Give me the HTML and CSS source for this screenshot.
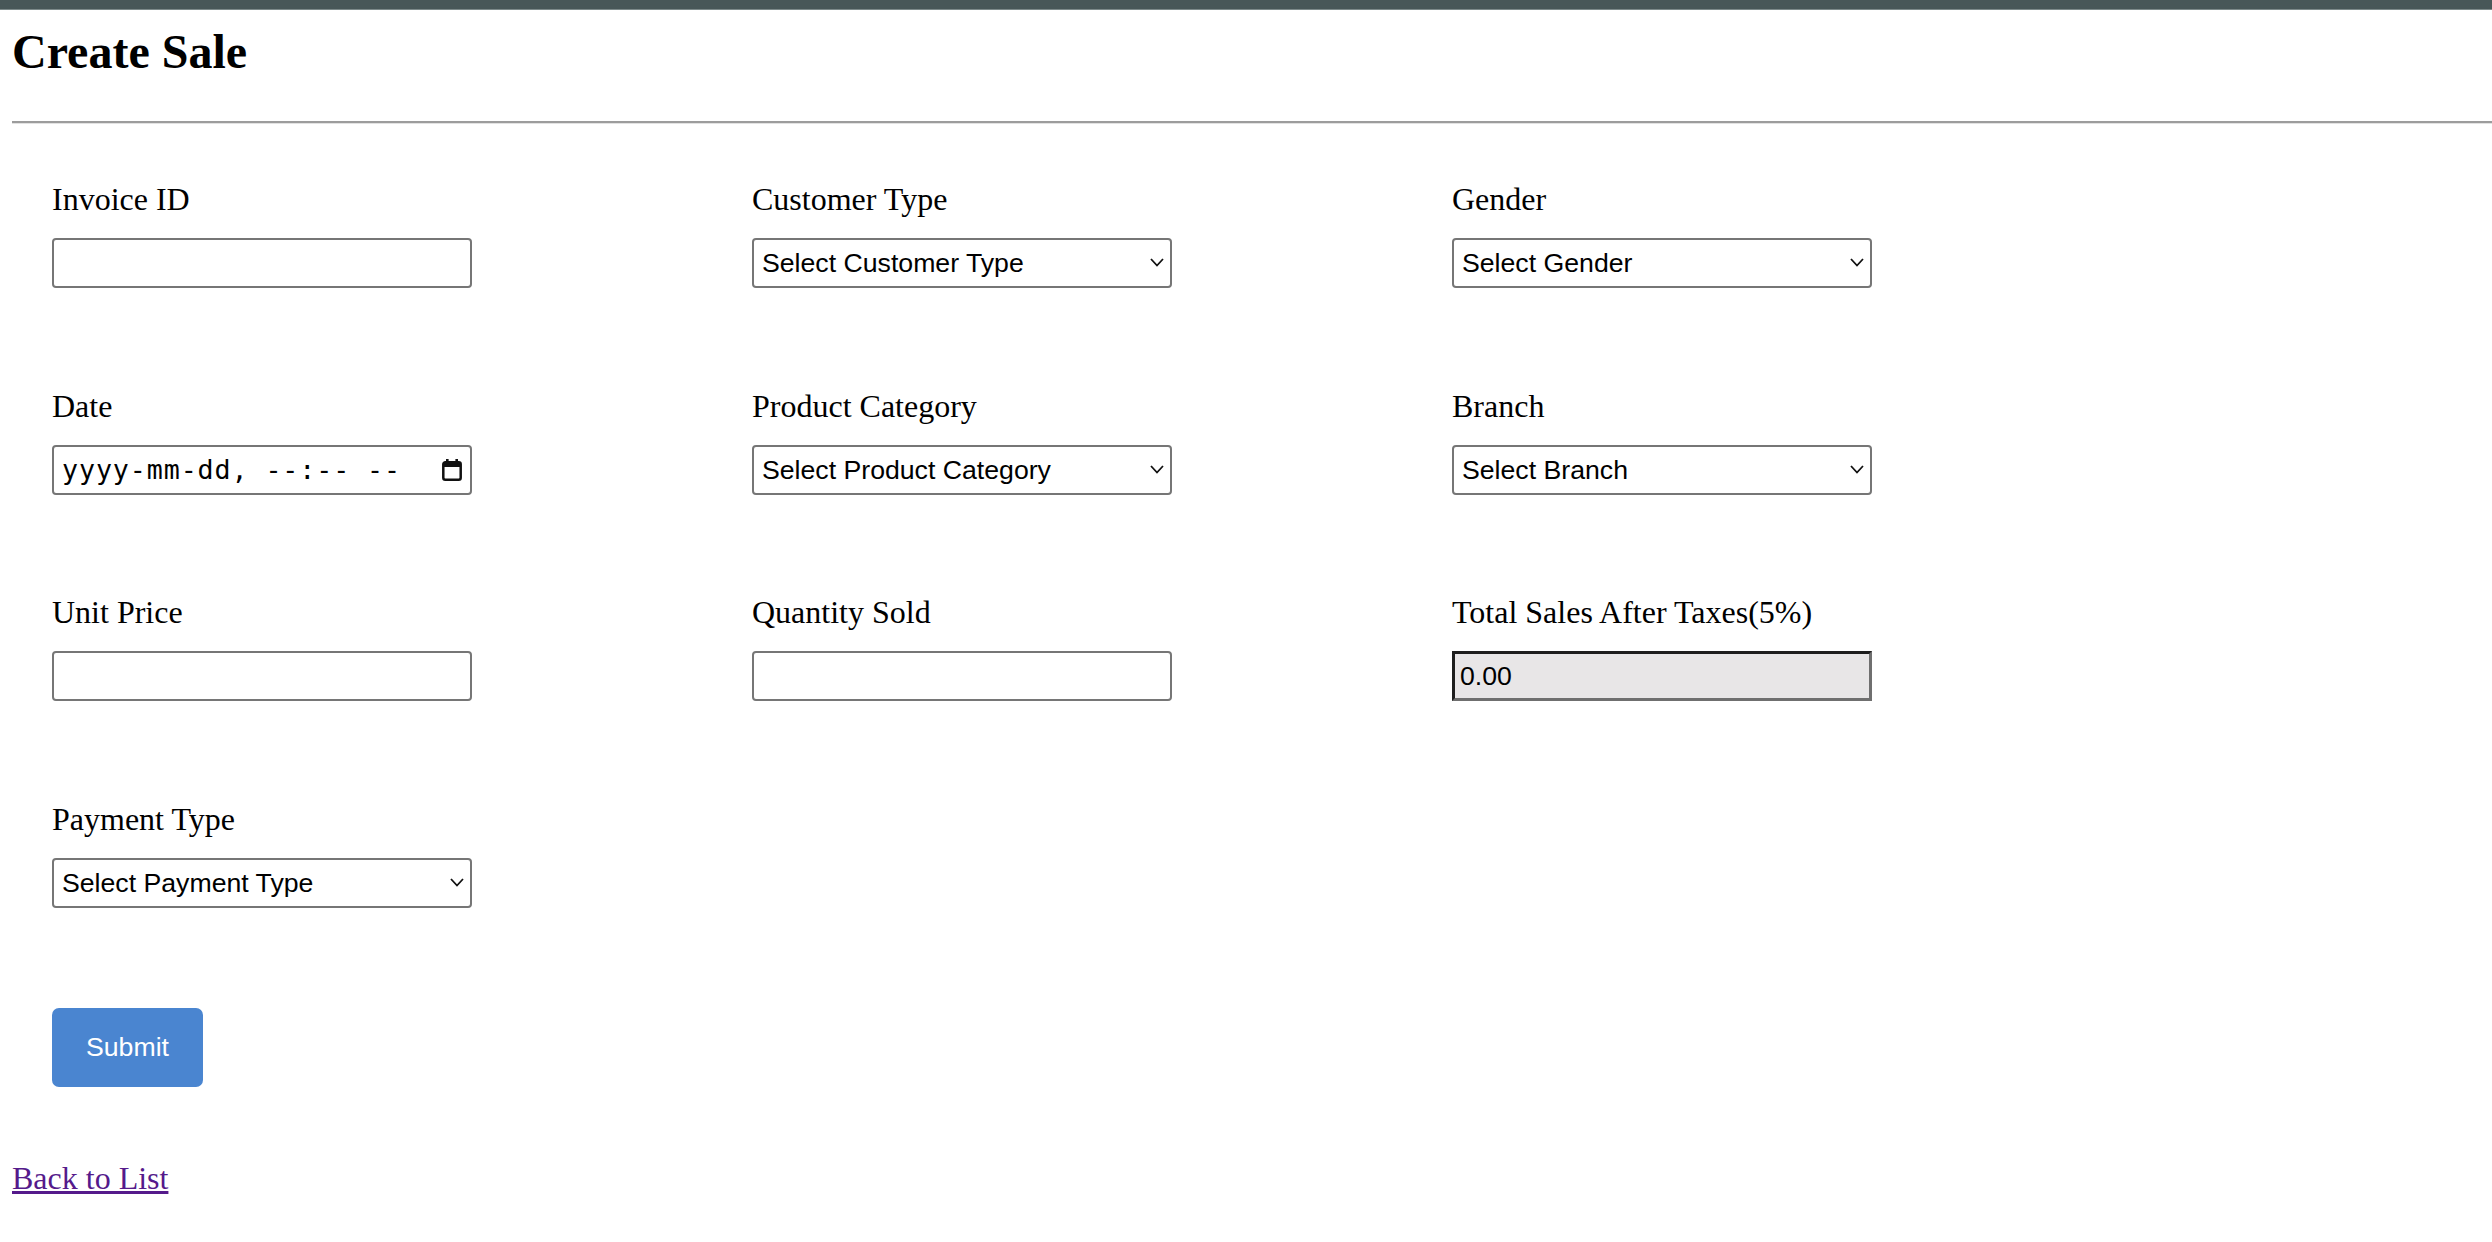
FILE: index.html
```html
<!DOCTYPE html>
<html lang="en">
<head>
<meta charset="utf-8">
<title>Create Sale</title>
<link rel="stylesheet" href="styles.css">
</head>
<body>
<div class="topbar"></div>
<main class="page">
  <h1 class="title">Create Sale</h1>
  <hr class="divider">
  <form class="sale-form">
    <div class="form-grid">
      <div class="field">
        <label class="field-label" for="invoice">Invoice ID</label>
        <input class="text-input" id="invoice" type="text">
      </div>
      <div class="field">
        <label class="field-label" for="ctype">Customer Type</label>
        <div class="select-wrap">
          <select class="select-input" id="ctype"><option>Select Customer Type</option></select>
          <svg class="chevron" width="14" height="9" viewBox="0 0 14 9"><polyline points="1,1 7,7.5 13,1" fill="none" stroke="#111" stroke-width="1.8"/></svg>
        </div>
      </div>
      <div class="field">
        <label class="field-label" for="gender">Gender</label>
        <div class="select-wrap">
          <select class="select-input" id="gender"><option>Select Gender</option></select>
          <svg class="chevron" width="14" height="9" viewBox="0 0 14 9"><polyline points="1,1 7,7.5 13,1" fill="none" stroke="#111" stroke-width="1.8"/></svg>
        </div>
      </div>

      <div class="field">
        <label class="field-label" for="date">Date</label>
        <div class="date-input">
          <input class="date-text" id="date" type="text" placeholder="yyyy-mm-dd, --:-- --">
          <svg class="cal-icon" width="20" height="22" viewBox="0 0 20 22">
            <rect x="4" y="0" width="2.6" height="4" fill="#111"/>
            <rect x="13.4" y="0" width="2.6" height="4" fill="#111"/>
            <rect x="1.3" y="3.3" width="17.4" height="17.4" rx="2" fill="none" stroke="#111" stroke-width="2.5"/>
            <rect x="1" y="3" width="18" height="5" fill="#111"/>
          </svg>
        </div>
      </div>
      <div class="field">
        <label class="field-label" for="pcat">Product Category</label>
        <div class="select-wrap">
          <select class="select-input" id="pcat"><option>Select Product Category</option></select>
          <svg class="chevron" width="14" height="9" viewBox="0 0 14 9"><polyline points="1,1 7,7.5 13,1" fill="none" stroke="#111" stroke-width="1.8"/></svg>
        </div>
      </div>
      <div class="field">
        <label class="field-label" for="branch">Branch</label>
        <div class="select-wrap">
          <select class="select-input" id="branch"><option>Select Branch</option></select>
          <svg class="chevron" width="14" height="9" viewBox="0 0 14 9"><polyline points="1,1 7,7.5 13,1" fill="none" stroke="#111" stroke-width="1.8"/></svg>
        </div>
      </div>

      <div class="field">
        <label class="field-label" for="price">Unit Price</label>
        <input class="text-input" id="price" type="text">
      </div>
      <div class="field">
        <label class="field-label" for="qty">Quantity Sold</label>
        <input class="text-input" id="qty" type="text">
      </div>
      <div class="field">
        <label class="field-label" for="total">Total Sales After Taxes(5%)</label>
        <input class="total-input" id="total" type="text" value="0.00" readonly>
      </div>

      <div class="field">
        <label class="field-label" for="ptype">Payment Type</label>
        <div class="select-wrap">
          <select class="select-input" id="ptype"><option>Select Payment Type</option></select>
          <svg class="chevron" width="14" height="9" viewBox="0 0 14 9"><polyline points="1,1 7,7.5 13,1" fill="none" stroke="#111" stroke-width="1.8"/></svg>
        </div>
      </div>
    </div>
    <div class="actions">
      <button class="submit-btn" type="button">Submit</button>
    </div>
  </form>
  <a class="back-link" href="#">Back to List</a>
</main>
</body>
</html>
```

FILE: styles.css
```css
html, body {
  margin: 0;
  padding: 0;
  background: #ffffff;
}

body {
  font-family: "Liberation Serif", "Times New Roman", serif;
  color: #000;
}

.topbar {
  height: 9px;
  background: #485758;
  border-bottom: 1px solid #7d8a8a;
}

.page {
  padding: 0 0 0 12px;
}

.title {
  margin: 15px 0 0;
  font-size: 48px;
  line-height: 53px;
  font-weight: bold;
}

.divider {
  margin: 43px 0 0;
  height: 0;
  border: 0;
  border-top: 2px solid #9c9c9c;
  border-bottom: 1px solid #e2e2e2;
}

.sale-form {
  padding: 58px 0 0 40px;
}

.form-grid {
  display: grid;
  grid-template-columns: repeat(3, 700px);
  row-gap: 100.6px;
}

.field {
  display: flex;
  flex-direction: column;
  align-items: flex-start;
}

.field-label {
  font-size: 32px;
  line-height: 35px;
  margin-bottom: 21px;
}

.text-input {
  box-sizing: border-box;
  width: 420px;
  height: 50px;
  border: 2px solid #767676;
  border-radius: 4px;
  background: #fff;
  margin: 0;
  padding: 0 8px;
  font-family: "Liberation Sans", Arial, sans-serif;
  font-size: 26.67px;
}

.select-wrap {
  position: relative;
  width: 420px;
  height: 50px;
}

.select-input {
  appearance: none;
  -webkit-appearance: none;
  box-sizing: border-box;
  width: 420px;
  height: 50px;
  margin: 0;
  border: 2px solid #767676;
  border-radius: 4px;
  background: #fff;
  color: #000;
  padding: 0 30px 0 8px;
  font-family: "Liberation Sans", Arial, sans-serif;
  font-size: 26.67px;
}

.chevron {
  position: absolute;
  right: 8px;
  top: 20px;
  pointer-events: none;
}

.date-input {
  box-sizing: border-box;
  width: 420px;
  height: 50px;
  border: 2px solid #767676;
  border-radius: 4px;
  background: #fff;
  display: flex;
  align-items: center;
  padding: 0 8px 0 8px;
  gap: 8px;
}

.date-text {
  flex: 1;
  min-width: 0;
  border: 0;
  outline: none;
  padding: 0;
  margin: 0;
  background: transparent;
  font-family: "DejaVu Sans Mono", "Liberation Mono", monospace;
  font-size: 26.67px;
  letter-spacing: 0.9px;
}

.date-text::placeholder {
  color: #000;
  opacity: 1;
}

.cal-icon {
  flex: none;
}

.total-input {
  box-sizing: border-box;
  width: 420px;
  height: 50px;
  margin: 0;
  border-style: solid;
  border-width: 3px;
  border-color: #1e1e1e #6f6f6f #6f6f6f #1e1e1e;
  border-radius: 0;
  background: #e8e6e7;
  padding: 0 5px;
  font-family: "Liberation Sans", Arial, sans-serif;
  font-size: 26.67px;
  color: #000;
  outline: none;
}

.actions {
  margin-top: 100.6px;
}

.submit-btn {
  background: #4a85d0;
  color: #fff;
  border: 0;
  border-radius: 7px;
  padding: 24px 34px;
  font-family: "Liberation Sans", Arial, sans-serif;
  font-size: 26.67px;
  line-height: 31px;
  cursor: pointer;
}

.back-link {
  display: inline-block;
  margin-top: 74px;
  font-size: 32px;
  line-height: 35px;
  color: #551a8b;
  text-decoration: underline;
}
```
